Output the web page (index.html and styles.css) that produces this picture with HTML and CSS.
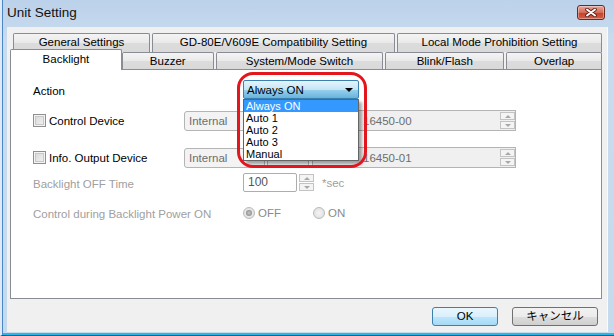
FILE: index.html
```html
<!DOCTYPE html>
<html lang="en">
<head>
   <meta charset="UTF-8">
   <title>Unit Setting</title>
   <link rel="stylesheet" href="styles.css">
</head>
<body>
   <div class="window">
      <div class="titlebar">
         <span class="title">Unit Setting</span>
         <div class="close">
            <svg width="12" height="9" viewBox="0 0 12 9">
               <path d="M2 1.5 L10 7.5 M10 1.5 L2 7.5" stroke="#5a1a12" stroke-width="3.6" stroke-linecap="round"/>
               <path d="M2 1.5 L10 7.5 M10 1.5 L2 7.5" stroke="#fff" stroke-width="2" stroke-linecap="round"/>
            </svg>
         </div>
      </div>

      <div class="client">
         <div class="tabs">
            <div class="tab-row back">
               <div class="tab" style="width:137px">General Settings</div>
               <div class="tab" style="width:243px">GD-80E/V609E Compatibility Setting</div>
               <div class="tab" style="width:205px">Local Mode Prohibition Setting</div>
            </div>
            <div class="tab-row front">
               <div class="tab active" style="width:112px">Backlight</div>
               <div class="tab first" style="width:92px">Buzzer</div>
               <div class="tab" style="width:168px">System/Mode Switch</div>
               <div class="tab" style="width:119px">Blink/Flash</div>
               <div class="tab" style="width:96px">Overlap</div>
            </div>
         </div>

         <div class="panel">
            <div class="row row-action">
               <span class="label">Action</span>
               <div class="combo open">
                  <span>Always ON</span>
                  <span class="arrow"></span>
               </div>
            </div>

            <div class="row row-device">
               <label class="check"><span class="box"></span>Control Device</label>
               <div class="dcombo wide"><span>Internal</span></div>
               <div class="dcombo small"><span class="tiny-arrow"></span></div>
               <div class="field long">
                  <span class="value">16450-00</span>
                  <div class="spin"><span class="up"></span><span class="down"></span></div>
               </div>
            </div>

            <div class="row row-info">
               <label class="check"><span class="box"></span>Info. Output Device</label>
               <div class="dcombo wide"><span>Internal</span></div>
               <div class="dcombo small"><span class="tiny-arrow"></span></div>
               <div class="field long">
                  <span class="value">16450-01</span>
                  <div class="spin"><span class="up"></span><span class="down"></span></div>
               </div>
            </div>

            <div class="row row-time">
               <span class="label disabled">Backlight OFF Time</span>
               <div class="numbox">100</div>
               <div class="spin loose"><span class="up"></span><span class="down"></span></div>
               <span class="unit">*sec</span>
            </div>

            <div class="row row-power">
               <span class="label disabled">Control during Backlight Power ON</span>
               <label class="radio"><span class="dot on"></span>OFF</label>
               <label class="radio"><span class="dot"></span>ON</label>
            </div>

            <ul class="droplist">
               <li class="selected">Always ON</li>
               <li>Auto 1</li>
               <li>Auto 2</li>
               <li>Auto 3</li>
               <li>Manual</li>
            </ul>
            <div class="ring"></div>
         </div>

         <div class="footer">
            <button class="btn default">OK</button>
            <button class="btn">キャンセル</button>
         </div>
      </div>
   </div>
</body>
</html>
```

FILE: styles.css
```css
body {
   margin: 0;
   font-family: "Liberation Sans", "Noto Sans CJK JP", sans-serif;
   font-size: 11.5px;
   color: #000;
   background: #fff;
}
.window {
   width: 614px;
   height: 336px;
   box-sizing: border-box;
   display: flex;
   flex-direction: column;
   background: linear-gradient(#bcd2ea, #c8dbef 40px, #c6daee);
   border-left: 2px solid #dfeaf6;
   border-bottom: 1px solid #2f4f74;
   box-shadow: inset 1px 0 0 #4b86c5, inset 0 -2px 0 #2ab6e6;
}
.titlebar {
   height: 27px;
   display: flex;
   align-items: flex-start;
   justify-content: space-between;
}
.title {
   font-size: 13.5px;
   margin: 5px 0 0 5px;
   color: #111;
}
.close {
   width: 28px;
   height: 15px;
   margin: 5px 9px 0 0;
   box-sizing: border-box;
   border: 1px solid #6b2a20;
   border-radius: 3px;
   background: linear-gradient(#e8a99d, #d66a55 50%, #c4402a 51%, #d45e46);
   display: flex;
   align-items: center;
   justify-content: center;
   box-shadow: inset 0 0 0 1px rgba(255,255,255,.35);
}
.client {
   flex: 1;
   margin: 0 6px 3px 5px;
   background: #f0f0f0;
   display: flex;
   flex-direction: column;
   border-right: 1px solid #f7fbff;
}
.tabs {
   margin: 6px 0 0 3px;
   width: 592px;
}
.tab-row {
   display: flex;
   align-items: flex-end;
}
.tab-row.back {
   height: 19px;
   padding-left: 3px;
}
.tab-row.front {
   height: 17px;
}
.tab {
   box-sizing: border-box;
   height: 100%;
   border: 1px solid #898c95;
   border-bottom: none;
   border-radius: 2px 2px 0 0;
   background: linear-gradient(#f4f4f4, #e9e9e9 50%, #dcdcdc 51%, #d9d9d9);
   text-align: center;
   line-height: 17px;
   margin-left: 2px;
   white-space: nowrap;
}
.tab-row.back .tab:first-child {
   margin-left: 0;
}
.tab.first {
   margin-left: 0;
}
.tab.active {
   height: 21px;
   margin: 0 0 -1px 0;
   position: relative;
   z-index: 2;
   background: #fff;
   line-height: 18px;
}
.panel {
   position: relative;
   margin-left: 3px;
   width: 592px;
   height: 230px;
   box-sizing: border-box;
   border: 1px solid #898c95;
   background: #fff;
   padding-left: 22px;
}
.row {
   display: flex;
   align-items: center;
}
.row-action { margin-top: 10px; height: 19px; }
.row-device { margin-top: 11px; height: 21px; }
.row-info { margin-top: 16px; height: 21px; }
.row-time { margin-top: 5px; height: 19px; }
.row-power { margin-top: 12px; height: 17px; }
.label {
   width: 210px;
   padding-top: 2px;
}
.label.disabled {
   color: #a0a0a0;
}
.combo {
   width: 116px;
   height: 19px;
   box-sizing: border-box;
   border: 1px solid #3c7fb1;
   border-radius: 2px;
   display: flex;
   align-items: center;
   justify-content: space-between;
   padding: 0 5px 0 3px;
   font-size: 11.5px;
}
.combo.open {
   background: linear-gradient(#e5f4fc, #c4e5f6 50%, #98d1ef 51%, #68b3db);
}
.arrow {
   width: 0;
   height: 0;
   border-left: 4px solid transparent;
   border-right: 4px solid transparent;
   border-top: 4px solid #000;
}
.check {
   width: 151px;
   display: flex;
   align-items: center;
}
.box {
   width: 13px;
   height: 13px;
   box-sizing: border-box;
   border: 1px solid #8e8f8f;
   background: linear-gradient(135deg, #d6d6d6, #f4f4f4);
   box-shadow: inset 0 0 0 1px #f4f4f4, inset 0 0 0 2px #c8c8c8;
   margin-right: 3px;
}
.dcombo {
   height: 20px;
   box-sizing: border-box;
   border: 1px solid #b4b4b4;
   border-radius: 3px;
   background: #f3f3f3;
   color: #6d6d6d;
   display: flex;
   align-items: center;
   padding-left: 4px;
}
.dcombo.wide { width: 81px; }
.dcombo.small {
   width: 42px;
   margin-left: 2px;
   justify-content: flex-end;
   padding-right: 9px;
}
.tiny-arrow {
   width: 0;
   height: 0;
   border-left: 2px solid transparent;
   border-right: 2px solid transparent;
   border-top: 2px solid #a0a0a0;
}
.field {
   height: 21px;
   box-sizing: border-box;
   border: 1px solid #b4b4b4;
   background: #f0f0f0;
   color: #6d6d6d;
   display: flex;
   align-items: center;
   justify-content: space-between;
   margin-left: 3px;
   padding: 0 0 0 50px;
}
.field.long { width: 204px; }
.spin {
   display: flex;
   flex-direction: column;
   gap: 1px;
}
.spin span {
   width: 15px;
   height: 8px;
   box-sizing: border-box;
   border: 1px solid #c3c3c3;
   background: #f4f4f4;
   position: relative;
}
.spin .up::after,
.spin .down::after {
   content: "";
   position: absolute;
   left: 4px;
   top: 2px;
   border-left: 3px solid transparent;
   border-right: 3px solid transparent;
}
.spin .up::after { border-bottom: 3px solid #a8a8a8; }
.spin .down::after { border-top: 3px solid #a8a8a8; }
.spin.loose {
   margin-left: 2px;
}
.numbox {
   width: 54px;
   height: 19px;
   box-sizing: border-box;
   border: 1px solid #adadad;
   border-radius: 2px;
   color: #555;
   padding-left: 4px;
   line-height: 17px;
   font-size: 12px;
}
.unit {
   margin-left: 8px;
   color: #a0a0a0;
}
.radio {
   display: flex;
   align-items: center;
   width: 70px;
   color: #8a8a8a;
}
.dot {
   width: 12px;
   height: 12px;
   border-radius: 50%;
   box-sizing: border-box;
   border: 1px solid #b9b9b9;
   background: radial-gradient(#f4f4f4, #dcdcdc);
   margin-right: 3px;
   position: relative;
}
.dot.on::after {
   content: "";
   position: absolute;
   left: 2px;
   top: 2px;
   width: 6px;
   height: 6px;
   border-radius: 50%;
   background: radial-gradient(#c8c8c8, #7a7a7a);
}
.droplist {
   position: absolute;
   left: 232px;
   top: 29px;
   width: 116px;
   margin: 0;
   padding: 0;
   list-style: none;
   box-sizing: border-box;
   border: 1px solid #646464;
   background: #fff;
   box-shadow: 3px 3px 3px rgba(0, 0, 0, .35);
   font-size: 11px;
   z-index: 3;
}
.droplist li {
   height: 12px;
   line-height: 12px;
   padding-left: 2px;
   overflow: hidden;
}
.droplist li.selected {
   background: #3399ff;
   color: #fff;
}
.ring {
   position: absolute;
   left: 226px;
   top: 2px;
   width: 130px;
   height: 96px;
   box-sizing: border-box;
   border: 3px solid #e3151d;
   border-radius: 16px;
   z-index: 4;
}
.footer {
   display: flex;
   justify-content: flex-end;
   gap: 14px;
   margin: 8px 9px 0 0;
}
.btn {
   height: 19px;
   box-sizing: border-box;
   font-family: "Liberation Sans", "Noto Sans CJK JP", sans-serif;
   font-size: 11.5px;
   border: 1px solid #707070;
   border-radius: 3px;
   background: linear-gradient(#f2f2f2, #ebebeb 50%, #dddddd 51%, #cfcfcf);
   padding: 0;
   line-height: 17px;
   width: 86px;
}
.btn.default {
   width: 66px;
   border-color: #3c7fb1;
   background: linear-gradient(#eaf6fd, #d9f0fc 50%, #bee6fd 51%, #a7d9f5);
}
```
